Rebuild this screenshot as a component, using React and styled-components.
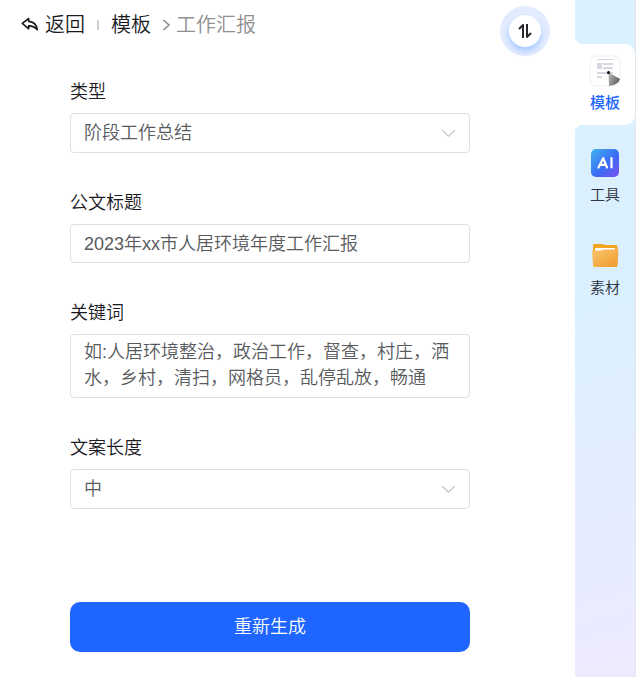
import React from "react";
import styled, { createGlobalStyle } from "styled-components";

const GlobalStyle = createGlobalStyle`
  *, *::before, *::after { box-sizing: border-box; }
  body {
    margin: 0;
    background: #fff;
    color: #1b1b1f;
    font-family: "Liberation Sans", "Noto Sans CJK SC", sans-serif;
    font-weight: 350;
  }
  button, input, select, textarea { font: inherit; color: inherit; }
`;

const Page = styled.div`
  display: flex;
  min-height: 100vh;
`;

const Main = styled.main`
  flex: 1;
  min-width: 0;
`;

const Header = styled.header`
  display: flex;
  align-items: flex-start;
  justify-content: space-between;
  padding: 6px 25px 0 21px;
`;

const Crumbs = styled.nav`
  display: flex;
  align-items: center;
  height: 38px;
  font-size: 20px;
  line-height: 30px;
`;

const BackButton = styled.button`
  display: flex;
  align-items: center;
  gap: 6px;
  padding: 0;
  border: 0;
  background: none;
  cursor: pointer;
`;

const Separator = styled.span`
  width: 2px;
  height: 10px;
  margin: 0 12px;
  background: #cfcfcf;
`;

const CrumbLink = styled.a`
  color: inherit;
  text-decoration: none;
`;

const CrumbArrow = styled.svg`
  margin: 0 5px 0 11px;
`;

const Current = styled.span`
  color: #909090;
`;

const SwapButton = styled.button`
  display: grid;
  place-items: center;
  width: 50px;
  height: 50px;
  padding: 0;
  border: 0;
  border-radius: 50%;
  background: #e3ecff;
  cursor: pointer;
`;

const SwapFace = styled.span`
  display: grid;
  place-items: center;
  width: 32px;
  height: 32px;
  border-radius: 50%;
  background: #fff;
  box-shadow: 0 4px 6px #a6c6ff;
`;

const Form = styled.form`
  display: flex;
  flex-direction: column;
  gap: 38px;
  padding: 24px 105px 25px 70px;
  font-size: 18px;
`;

const Field = styled.div`
  display: flex;
  flex-direction: column;
  gap: 9px;
`;

const Label = styled.label`
  line-height: 24px;
`;

const control = `
  display: block;
  width: 100%;
  border: 1px solid #dcdfe6;
  border-radius: 4px;
  background: #fff;
  color: #585a5e;
  outline: none;
`;

const SelectWrap = styled.div`
  display: grid;
  align-items: center;

  > * { grid-area: 1 / 1; }
`;

const Select = styled.select`
  ${control}
  appearance: none;
  height: 40px;
  padding: 0 40px 0 13px;
`;

const Chevron = styled.svg`
  justify-self: end;
  margin-right: 14px;
  pointer-events: none;
`;

const Input = styled.input`
  ${control}
  height: 39px;
  padding: 0 13px 4px;
`;

const TextArea = styled.textarea`
  ${control}
  height: 64px;
  padding: 4px 13px 6px;
  line-height: 26px;
  resize: none;
  overflow: hidden;

  &::placeholder { color: #585a5e; opacity: 1; }
`;

const Submit = styled.button`
  height: 50px;
  margin-top: 55px;
  padding: 0 0 4px;
  border: 0;
  border-radius: 10px;
  background: #1e66ff;
  color: #fff;
  cursor: pointer;
`;

const Sidebar = styled.nav`
  display: flex;
  flex-direction: column;
  width: 61px;
  padding-top: 44px;
  border-right: 1px solid #e4e7ee;
  background: linear-gradient(165deg, #daf1ff 0%, #dbf0ff 45%, #e6ecff 80%, #eeeafe 100%);
`;

const SideItem = styled.button`
  position: relative;
  display: flex;
  flex-direction: column;
  align-items: center;
  gap: 4px;
  height: ${(p) => (p.$active ? 81 : 93)}px;
  padding: ${(p) => (p.$active ? "11px 0 0" : "22px 0 0")};
  border: 0;
  border-radius: 0 10px 10px 0;
  background: ${(p) => (p.$active ? "#fff" : "none")};
  color: ${(p) => (p.$active ? "#1e66ff" : "#2c3440")};
  font-size: 15px;
  font-weight: ${(p) => (p.$active ? 500 : 350)};
  line-height: 24px;
  cursor: pointer;

  &::before, &::after {
    content: "";
    display: ${(p) => (p.$active ? "block" : "none")};
    position: absolute;
    left: 0;
    width: 7px;
    height: 7px;
  }
  &::before {
    bottom: 100%;
    background: radial-gradient(circle at 100% 0, transparent 7px, #fff 7px);
  }
  &::after {
    top: 100%;
    background: radial-gradient(circle at 100% 100%, transparent 7px, #fff 7px);
  }
`;

function DropField({ id, label, options }) {
  return (
    <Field>
      <Label htmlFor={id}>{label}</Label>
      <SelectWrap>
        <Select id={id}>
          {options.map((o) => <option key={o}>{o}</option>)}
        </Select>
        <Chevron width="15" height="9" viewBox="0 0 15 9" fill="none" stroke="#c0c4cc" strokeWidth="1.2">
          <path d="M1.3 1.2l6.2 6 6.2-6" />
        </Chevron>
      </SelectWrap>
    </Field>
  );
}

function BackIcon() {
  return (
    <svg width="18" height="16" viewBox="0 0 18 16" fill="none" stroke="#1b1b1f" strokeWidth="1.6" strokeLinejoin="round">
      <path d="M1.3 6.4L7.7 1.5v2.9c4.9.3 7.9 3 8.6 8.4-2.3-2.7-4.7-3.9-8.6-3.9v2.9z" />
    </svg>
  );
}

function SwapIcon() {
  return (
    <svg width="16" height="16" viewBox="0 0 16 16" fill="none" stroke="#26282c" strokeWidth="2" strokeLinejoin="round">
      <path d="M2 6L6 2V15" />
      <path d="M10 1V14L14 10" />
    </svg>
  );
}

function TemplateIcon() {
  return (
    <svg width="32" height="32" viewBox="0 0 32 32">
      <defs>
        <linearGradient id="cone" x1="0" y1="0" x2="1" y2="0.4">
          <stop offset="0" stopColor="#b9b9b9" />
          <stop offset="1" stopColor="#626262" />
        </linearGradient>
      </defs>
      <rect x="1" y="1" width="30" height="30" rx="6" fill="#fff" stroke="#efeff1" />
      <g fill="#d5d8e0">
        <rect x="8" y="4" width="16" height="1" />
        <rect x="8" y="8" width="5" height="6" />
        <rect x="14" y="8" width="10" height="2" />
        <rect x="14" y="12" width="10" height="2" />
        <rect x="8" y="17" width="16" height="2" />
        <rect x="8" y="21" width="5" height="2" />
      </g>
      <path d="M19.5 17.5L31 24q-2 6-11 7z" fill="url(#cone)" />
      <circle cx="19.5" cy="17.5" r="1.5" fill="#000" />
    </svg>
  );
}

function AiIcon() {
  return (
    <svg width="30" height="32" viewBox="0 0 30 32">
      <defs>
        <linearGradient id="ai" x1="0" y1="0" x2="1" y2="1">
          <stop offset="0" stopColor="#42b4ee" />
          <stop offset="0.55" stopColor="#3a6cf5" />
          <stop offset="1" stopColor="#7a50ee" />
        </linearGradient>
      </defs>
      <rect x="1" y="2" width="28" height="28" rx="5" fill="url(#ai)" />
      <g fill="none" stroke="#fff" strokeWidth="2.2" strokeLinecap="round" strokeLinejoin="round">
        <path d="M8.5 20.5L13.2 11.2L17 20.5M10 17.8H15.5" />
        <path d="M21.5 11.2V20.5" />
      </g>
    </svg>
  );
}

function FolderIcon() {
  return (
    <svg width="30" height="32" viewBox="0 0 30 32">
      <defs>
        <linearGradient id="folder" x1="0" y1="0" x2="1" y2="1">
          <stop offset="0" stopColor="#fac56c" />
          <stop offset="1" stopColor="#f09a2c" />
        </linearGradient>
      </defs>
      <path d="M3 5.5q0-1.500 1.500-1.500h8q1 0 1.500 1h12q1.500 0 1.500 1.500V22H3z" fill="#f3a51f" />
      <rect x="5" y="8" width="20" height="8" fill="#fff" />
      <path d="M2 10.5h9.5l1.500-1h15.500L27.500 25.500q0 1.500-1.500 1.500H4.500q-1.500 0-1.500-1.500z" fill="url(#folder)" />
    </svg>
  );
}

const tabs = [
  { name: "模板", Icon: TemplateIcon, active: true },
  { name: "工具", Icon: AiIcon },
  { name: "素材", Icon: FolderIcon },
];

export default function App() {
  return (
    <>
      <GlobalStyle />
      <Page>
        <Main>
          <Header>
            <Crumbs aria-label="路径">
              <BackButton type="button"><BackIcon />返回</BackButton>
              <Separator />
              <CrumbLink href="#templates">模板</CrumbLink>
              <CrumbArrow width="9" height="12" viewBox="0 0 9 12" fill="none" stroke="#888" strokeWidth="1.5">
                <path d="M1.5 1l5.5 5-5.5 5" />
              </CrumbArrow>
              <Current aria-current="page">工作汇报</Current>
            </Crumbs>
            <SwapButton type="button" aria-label="切换">
              <SwapFace><SwapIcon /></SwapFace>
            </SwapButton>
          </Header>
          <Form onSubmit={(e) => e.preventDefault()}>
            <DropField id="type" label="类型" options={["阶段工作总结"]} />
            <Field>
              <Label htmlFor="title">公文标题</Label>
              <Input id="title" defaultValue="2023年xx市人居环境年度工作汇报" />
            </Field>
            <Field>
              <Label htmlFor="keywords">关键词</Label>
              <TextArea
                id="keywords"
                placeholder="如:人居环境整治，政治工作，督查，村庄，洒水，乡村，清扫，网格员，乱停乱放，畅通"
              />
            </Field>
            <DropField id="length" label="文案长度" options={["中"]} />
            <Submit type="submit">重新生成</Submit>
          </Form>
        </Main>
        <Sidebar aria-label="功能">
          {tabs.map(({ name, Icon, active }) => (
            <SideItem key={name} type="button" $active={active}>
              <Icon />
              {name}
            </SideItem>
          ))}
        </Sidebar>
      </Page>
    </>
  );
}
